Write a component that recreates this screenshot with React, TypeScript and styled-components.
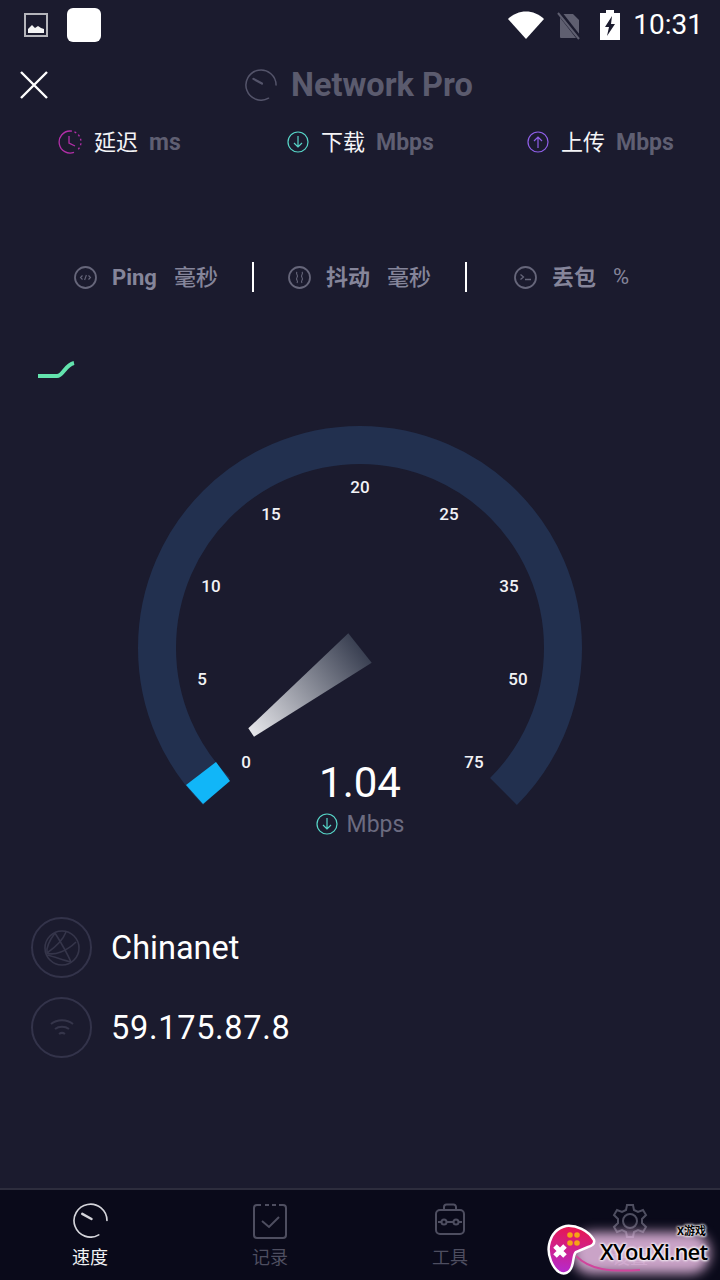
import React from "react";
import styled, { createGlobalStyle } from "styled-components";

const GlobalStyle = createGlobalStyle`
  html, body {
    margin: 0;
    padding: 0;
    background: #1b1b2e;
  }
  * {
    box-sizing: border-box;
  }
`;

const FONT = `Roboto, "Noto Sans CJK SC", sans-serif`;

const Screen = styled.div`
  position: relative;
  width: 720px;
  height: 1280px;
  overflow: hidden;
  display: flex;
  flex-direction: column;
  background: #1b1b2e;
  font-family: ${FONT};
  font-variant-numeric: tabular-nums;
  color: #fff;
`;

const StatusBar = styled.div`
  height: 50px;
  display: flex;
  align-items: center;
  padding: 0 17px 0 24px;
`;

const NotifySquare = styled.div`
  width: 34px;
  height: 34px;
  margin-left: 19px;
  background: #fff;
  border-radius: 6px;
`;

const StatusRight = styled.div`
  margin-left: auto;
  display: flex;
  align-items: center;
`;

const Clock = styled.span`
  margin-left: 13px;
  font-size: 28px;
  line-height: 50px;
`;

const Header = styled.header`
  position: relative;
  height: 70px;
  display: flex;
  align-items: center;
  padding-left: 20px;
`;

const Title = styled.div`
  margin-left: 197px;
  display: flex;
  align-items: center;
  gap: 14px;
  font-size: 32.5px;
  font-weight: 700;
  color: #5b5b6e;
`;

const MetricRow = styled.div`
  height: 44px;
  padding-left: 58px;
  display: grid;
  grid-template-columns: 229px 240px 1fr;
  align-items: center;
`;

const Metric = styled.div`
  display: flex;
  align-items: center;
`;

const MetricName = styled.span`
  margin: 0 11px 4px 12px;
  font-size: 22px;
  color: #f4f4f6;
`;

const MetricUnit = styled.span`
  font-size: 23px;
  font-weight: 700;
  color: #5f5f72;
`;

const SubRow = styled.div`
  margin-top: 97px;
  height: 32px;
  padding-left: 74px;
  display: flex;
  align-items: center;
`;

const SubCell = styled.div<{ $width: number }>`
  width: ${(p) => p.$width}px;
  display: flex;
  align-items: center;
  color: #85859a;
  font-size: 22px;
`;

const SubName = styled.span<{ $lift: number }>`
  margin: 0 17px ${(p) => p.$lift}px 15px;
  font-weight: 700;
`;

const SubUnit = styled.span<{ $lift: number; $thin?: boolean }>`
  font-weight: ${(p) => (p.$thin ? 400 : 500)};
  margin-bottom: ${(p) => p.$lift}px;
`;

const Divider = styled.div<{ $after: number }>`
  width: 2px;
  height: 30px;
  background: #fff;
  margin-right: ${(p) => p.$after}px;
`;

const Spark = styled.div`
  margin-top: 67px;
  height: 20px;
  padding-left: 36px;
  display: flex;
`;

const GaugeWrap = styled.div`
  position: relative;
  margin-top: 40px;
  height: 440px;
`;

const GaugeSvg = styled.svg`
  display: block;
`;

const Tick = styled.text`
  font-family: ${FONT};
  font-size: 17px;
  font-weight: 500;
  fill: #f2f2f5;
  text-anchor: middle;
`;

const Reading = styled.div`
  position: absolute;
  left: 0;
  right: 0;
  top: 341px;
  display: flex;
  flex-direction: column;
  align-items: center;
`;

const ReadingValue = styled.div`
  font-size: 42px;
  line-height: 44px;
`;

const ReadingUnit = styled.div`
  height: 38px;
  display: flex;
  align-items: center;
  gap: 9px;
  font-size: 23px;
  color: #6b6b80;
`;

const InfoList = styled.div`
  margin-top: 57px;
  padding-left: 31px;
  display: flex;
  flex-direction: column;
  gap: 19px;
`;

const InfoRow = styled.div<{ $spacing?: number }>`
  height: 61px;
  display: flex;
  align-items: center;
  gap: 19px;
  font-size: 32.5px;
  letter-spacing: ${(p) => p.$spacing ?? 0}px;
`;

const InfoBadge = styled.div`
  width: 61px;
  height: 61px;
  border-radius: 50%;
  border: 2px solid #33334a;
  display: flex;
  align-items: center;
  justify-content: center;
`;

const Nav = styled.nav`
  margin-top: auto;
  height: 92px;
  background: #0a0a1a;
  border-top: 2px solid #2d2d3d;
  display: grid;
  grid-template-columns: repeat(4, 180px);
`;

const NavItem = styled.div<{ $active?: boolean }>`
  display: flex;
  flex-direction: column;
  align-items: center;
  padding-top: 13px;
  font-size: 18px;
  color: ${(p) => (p.$active ? "#f2f2f4" : "#4e4e60")};
`;

const NavIcon = styled.div`
  height: 36px;
  margin-bottom: 4px;
`;

const Watermark = styled.div`
  position: absolute;
  left: 546px;
  top: 1222px;
  width: 168px;
  height: 56px;
`;

const WatermarkGlow = styled.div`
  position: absolute;
  left: 26px;
  top: 10px;
  width: 138px;
  height: 42px;
  border-radius: 20px;
  background: rgba(236, 190, 230, 0.85);
  filter: blur(6px);
`;

const WatermarkLogo = styled.svg`
  position: absolute;
  left: 0;
  top: 2px;
`;

const WatermarkSmall = styled.span`
  position: absolute;
  right: 8px;
  top: 3px;
  font-size: 11px;
  line-height: 14px;
  font-weight: 700;
  color: #000;
  text-shadow: 0 0 3px #fff, 0 0 3px #fff, 0 0 3px #fff;
`;

const WatermarkText = styled.span`
  position: absolute;
  left: 54px;
  top: 15px;
  font-family: "Open Sans", Roboto, sans-serif;
  font-size: 22px;
  line-height: 28px;
  font-weight: 600;
  letter-spacing: -0.8px;
  color: #000;
  text-shadow: 0 0 3px #fff, 0 0 3px #fff, 0 0 3px #fff;
`;

const GaugeGlyph = ({ size, color }: { size: number; color: string }) => (
  <svg width={size} height={size} viewBox="0 0 34 34" fill="none" stroke={color}>
    <path d="M25 31A16 16 0 1 1 33 17" strokeWidth="1.6" strokeLinecap="round" />
    <path d="M9 10.5L18 15.5" strokeWidth="2.4" strokeLinecap="round" />
  </svg>
);

const RoundArrow = ({ up, color, size = 22 }: { up?: boolean; color: string; size?: number }) => (
  <svg width={size} height={size} viewBox="0 0 22 22" fill="none" stroke={color} strokeWidth="1.2">
    <circle cx="11" cy="11" r="10" />
    {up ? <path d="M11 17V6M7 10l4-4 4 4" /> : <path d="M11 5v11M7 12l4 4 4-4" />}
  </svg>
);

const LatencyIcon = () => (
  <svg width="24" height="24" viewBox="0 0 24 24" fill="none" stroke="#b22fa8" strokeWidth="1.3">
    <path d="M12 1A11 11 0 1 0 16 22.3" />
    <path d="M12 1A11 11 0 0 1 23 12A11 11 0 0 1 19.5 20" strokeDasharray="2 2.6" />
    <path d="M11 6v7l6 3" />
  </svg>
);

const PingIcon = () => (
  <svg width="23" height="23" viewBox="0 0 23 23" fill="none" stroke="#66667a" strokeWidth="1.8">
    <circle cx="11.5" cy="11.5" r="10.5" />
    <path d="M8.5 9.5l-2 2 2 2M14.5 9.5l2 2-2 2M12.4 9l-1.8 5" strokeWidth="1.1" />
  </svg>
);

const JitterIcon = () => (
  <svg width="23" height="23" viewBox="0 0 23 23" fill="none" stroke="#66667a" strokeWidth="1.8">
    <circle cx="11.5" cy="11.5" r="10.5" />
    <path d="M9 6c-2 2 2 3 0 5.500s2 3 0 5.500M14 6c2 2-2 3 0 5.500s-2 3 0 5.500" strokeWidth="1.1" />
  </svg>
);

const LossIcon = () => (
  <svg width="23" height="23" viewBox="0 0 23 23" fill="none" stroke="#66667a" strokeWidth="1.8">
    <circle cx="11.5" cy="11.5" r="10.5" />
    <path d="M6.500 8.500l3 2.500-3 2.500M11 13.500h6" strokeWidth="1.3" />
  </svg>
);

const GlobeIcon = () => (
  <svg width="38" height="38" viewBox="0 0 38 38" fill="none" stroke="#35354a" strokeWidth="1.6">
    <circle cx="19" cy="19" r="17" />
    <path d="M12 4c-6 8-9 14-8 20 7 3 20-2 29-11M12 4c5 8 12 20 16 29M4 26c8 2 16 5 24 7M23 3c-3 8-9 14-19 21" />
  </svg>
);

const WifiSmallIcon = () => (
  <svg width="26" height="22" viewBox="0 0 26 22" fill="none" stroke="#35354a" strokeWidth="2">
    <path d="M2 7c6-5 16-5 22 0M6 12c4-3 10-3 14 0M10 17c2-1.500 4-1.500 6 0" />
  </svg>
);

const RecordIcon = () => (
  <svg width="34" height="36" viewBox="0 0 34 36" fill="none" stroke="#4e4e60" strokeWidth="2">
    <path d="M8 2H4a3 3 0 0 0-3 3v27a3 3 0 0 0 3 3h26a3 3 0 0 0 3-3V5a3 3 0 0 0-3-3h-4" />
    <path d="M12 2h4M19 2h4" />
    <path d="M9 18l7 6 10-10" />
  </svg>
);

const ToolIcon = () => (
  <svg width="30" height="32" viewBox="0 0 30 32" fill="none" stroke="#4e4e60" strokeWidth="2">
    <rect x="1" y="7" width="28" height="24" rx="4" />
    <path d="M9 7V4a2.500 2.500 0 0 1 2.500-2.500h7A2.500 2.500 0 0 1 21 4v3" />
    <circle cx="9" cy="19" r="2.500" />
    <circle cx="21" cy="19" r="2.500" />
    <path d="M11.500 19h7M3 19h3.500M23.500 19H27" />
  </svg>
);

const GearIcon = () => (
  <svg width="36" height="36" viewBox="0 0 36 36" fill="none" stroke="#4e4e60" strokeWidth="2">
    <path d="M15 2h6l1 5 4 2 5-2 3 5-4 4v4l4 4-3 5-5-2-4 2-1 5h-6l-1-5-4-2-5 2-3-5 4-4v-4l-4-4 3-5 5 2 4-2z" />
    <circle cx="18" cy="18" r="7" />
  </svg>
);

const ticks = [
  { label: "0", x: 246, y: 348 },
  { label: "5", x: 202, y: 265 },
  { label: "10", x: 211, y: 172 },
  { label: "15", x: 271, y: 100 },
  { label: "20", x: 360, y: 73 },
  { label: "25", x: 449, y: 100 },
  { label: "35", x: 509, y: 172 },
  { label: "50", x: 518, y: 265 },
  { label: "75", x: 474, y: 348 },
];

export default function App() {
  return (
    <Screen>
      <GlobalStyle />
      <StatusBar>
        <svg width="24" height="24" viewBox="0 0 24 24" fill="none">
          <rect x="1" y="1" width="22" height="22" stroke="#b5b5bb" strokeWidth="2" />
          <path d="M4 20v-4l4-4 3 3 3-2 3 2 3 1v4z" fill="#f4f4f4" />
        </svg>
        <NotifySquare />
        <StatusRight>
          <svg width="36" height="28" viewBox="0 0 36 28" fill="#fff">
            <path d="M0 8C10-2 26-2 36 8L18 28z" />
          </svg>
          <svg width="24" height="30" viewBox="0 0 24 30" style={{ marginLeft: 13 }}>
            <path d="M3 4h13l6 6v17a1 1 0 0 1-1 1H4a1 1 0 0 1-1-1z" fill="#5f5f70" />
            <path d="M1 1l22 28" stroke="#1b1b2e" strokeWidth="5" />
            <path d="M1 3l21 26" stroke="#5f5f70" strokeWidth="2" />
          </svg>
          <svg width="20" height="30" viewBox="0 0 20 30" style={{ marginLeft: 19 }}>
            <path d="M6 0h8v3h6v27H0V3h6z" fill="#fff" />
            <path d="M12 6l-7 11h4l-2 9 8-12h-4z" fill="#1b1b2e" />
          </svg>
          <Clock>10:31</Clock>
        </StatusRight>
      </StatusBar>

      <Header>
        <svg width="28" height="28" viewBox="0 0 28 28" stroke="#fff" strokeWidth="2.4">
          <path d="M1 1l26 26M27 1L1 27" />
        </svg>
        <Title>
          <GaugeGlyph size={32} color="#54546a" />
          Network Pro
        </Title>
      </Header>

      <MetricRow>
        <Metric>
          <LatencyIcon />
          <MetricName>延迟</MetricName>
          <MetricUnit>ms</MetricUnit>
        </Metric>
        <Metric>
          <RoundArrow color="#57d6c8" />
          <MetricName>下载</MetricName>
          <MetricUnit>Mbps</MetricUnit>
        </Metric>
        <Metric>
          <RoundArrow up color="#8f5fe8" />
          <MetricName>上传</MetricName>
          <MetricUnit>Mbps</MetricUnit>
        </Metric>
      </MetricRow>

      <SubRow>
        <SubCell $width={178}>
          <PingIcon />
          <SubName $lift={0}>Ping</SubName>
          <SubUnit $lift={5}>毫秒</SubUnit>
        </SubCell>
        <Divider $after={34} />
        <SubCell $width={177}>
          <JitterIcon />
          <SubName $lift={4}>抖动</SubName>
          <SubUnit $lift={5}>毫秒</SubUnit>
        </SubCell>
        <Divider $after={47} />
        <SubCell $width={130}>
          <LossIcon />
          <SubName $lift={4}>丢包</SubName>
          <SubUnit $lift={1} $thin>
            %
          </SubUnit>
        </SubCell>
      </SubRow>

      <Spark>
        <svg width="42" height="20" viewBox="0 0 42 20" fill="none">
          <path d="M2 16h19c6 0 8-11 17-13" stroke="#63e3ad" strokeWidth="4" />
        </svg>
      </Spark>

      <GaugeWrap>
        <GaugeSvg width="720" height="440" viewBox="0 0 720 440">
          <defs>
            <linearGradient id="needle" x1="251" y1="312" x2="360" y2="228" gradientUnits="userSpaceOnUse">
              <stop offset="0" stopColor="#e6e6ea" />
              <stop offset="1" stopColor="#3a4052" />
            </linearGradient>
          </defs>
          <path d="M216.500 371.500A203 203 0 1 1 503.500 371.500" fill="none" stroke="#22304f" strokeWidth="38" />
          <polygon points="203,384 230,361 216,342 186,365" fill="#11b6f8" />
          <polygon points="248.300,308.300 254,316.700 371.700,242.700 348.300,213.300" fill="url(#needle)" />
          {ticks.map((t) => (
            <Tick key={t.label} x={t.x} y={t.y}>
              {t.label}
            </Tick>
          ))}
        </GaugeSvg>
        <Reading>
          <ReadingValue>1.04</ReadingValue>
          <ReadingUnit>
            <RoundArrow color="#57d6c8" />
            Mbps
          </ReadingUnit>
        </Reading>
      </GaugeWrap>

      <InfoList>
        <InfoRow>
          <InfoBadge>
            <GlobeIcon />
          </InfoBadge>
          Chinanet
        </InfoRow>
        <InfoRow $spacing={0.7}>
          <InfoBadge>
            <WifiSmallIcon />
          </InfoBadge>
          59.175.87.8
        </InfoRow>
      </InfoList>

      <Nav>
        <NavItem $active>
          <NavIcon>
            <GaugeGlyph size={35} color="#d4d4da" />
          </NavIcon>
          速度
        </NavItem>
        <NavItem>
          <NavIcon>
            <RecordIcon />
          </NavIcon>
          记录
        </NavItem>
        <NavItem>
          <NavIcon>
            <ToolIcon />
          </NavIcon>
          工具
        </NavItem>
        <NavItem>
          <NavIcon>
            <GearIcon />
          </NavIcon>
          设置
        </NavItem>
      </Nav>

      <Watermark>
        <WatermarkGlow />
        <WatermarkLogo width="100" height="54" viewBox="0 0 100 54" fill="none">
          <defs>
            <linearGradient id="pad" x1="25" y1="2" x2="20" y2="50" gradientUnits="userSpaceOnUse">
              <stop offset="0" stopColor="#e8174e" />
              <stop offset="1" stopColor="#b42ad0" />
            </linearGradient>
          </defs>
          <path d="M30 32c14 14 34 16 64 14" stroke="#d0459c" strokeWidth="2" />
          <path
            d="M20 2c10-1 22 4 28 14 1 4-2 6-6 7l-12 5c-3 3-2 8-4 14-2 7-8 9-13 6C7 44 1 32 3 21 5 11 11 4 20 2z"
            fill="url(#pad)"
            stroke="#fff"
            strokeWidth="2.500"
          />
          <path d="M9 22l10 10M19 22L9 32" stroke="#fff" strokeWidth="5" />
          <g fill="#f5a316">
            <circle cx="24" cy="11" r="2.800" />
            <circle cx="31" cy="11" r="2.800" />
            <circle cx="24" cy="19" r="2.800" />
            <circle cx="31" cy="19" r="2.800" />
          </g>
        </WatermarkLogo>
        <WatermarkSmall>X游戏</WatermarkSmall>
        <WatermarkText>XYouXi.net</WatermarkText>
      </Watermark>
    </Screen>
  );
}
